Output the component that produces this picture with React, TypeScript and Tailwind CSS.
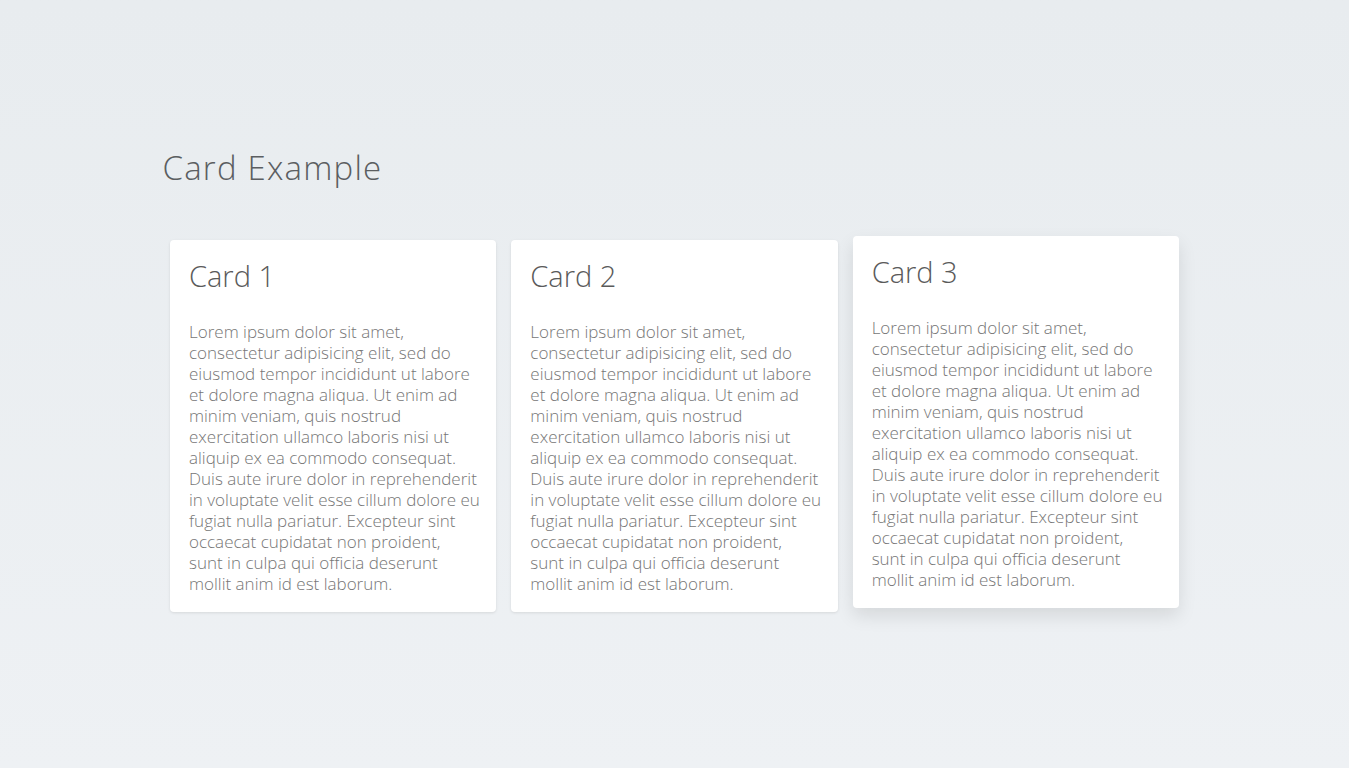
import React from 'react';

const lines = [
  'Lorem ipsum dolor sit amet,',
  'consectetur adipisicing elit, sed do',
  'eiusmod tempor incididunt ut labore',
  'et dolore magna aliqua. Ut enim ad',
  'minim veniam, quis nostrud',
  'exercitation ullamco laboris nisi ut',
  'aliquip ex ea commodo consequat.',
  'Duis aute irure dolor in reprehenderit',
  'in voluptate velit esse cillum dolore eu',
  'fugiat nulla pariatur. Excepteur sint',
  'occaecat cupidatat non proident,',
  'sunt in culpa qui officia deserunt',
  'mollit anim id est laborum.',
];

const Card = ({ title, raised }: { title: string; raised?: boolean }) => (
  <div className="px-[7.5px] min-w-0">
    <div
      className={
        raised
          ? 'bg-white rounded px-[19px] pt-[19px] pb-[18px] -translate-y-[4px] shadow-[0_8px_18px_rgba(0,0,0,0.1)]'
          : 'bg-white rounded px-[19px] pt-[19px] pb-[18px] shadow-[0_1px_3px_rgba(0,0,0,0.1)]'
      }
    >
      <h2 className="text-[29px] leading-[1.2] font-light text-[#5a5a5a]">{title}</h2>
      <p className="mt-[27px] text-[17px] leading-[21px] font-light text-[#767676] whitespace-nowrap">
        {lines.map((l, i) => (
          <React.Fragment key={i}>
            {l}
            {i < lines.length - 1 && <br />}
          </React.Fragment>
        ))}
      </p>
    </div>
  </div>
);

export default function App() {
  return (
    <div
      className="min-h-screen bg-gradient-to-b from-[#e8ecef] to-[#eef1f4] pt-[149px]"
      style={{ fontFamily: '"Open Sans", sans-serif' }}
    >
      <div className="w-[1024px] mx-auto">
        <h1 className="text-[33px] leading-[38px] font-light tracking-[1.2px] text-[#5b5e61]">Card Example</h1>
        <div className="grid grid-cols-3 mt-[53px]">
          <Card title="Card 1" />
          <Card title="Card 2" />
          <Card title="Card 3" raised />
        </div>
      </div>
    </div>
  );
}
